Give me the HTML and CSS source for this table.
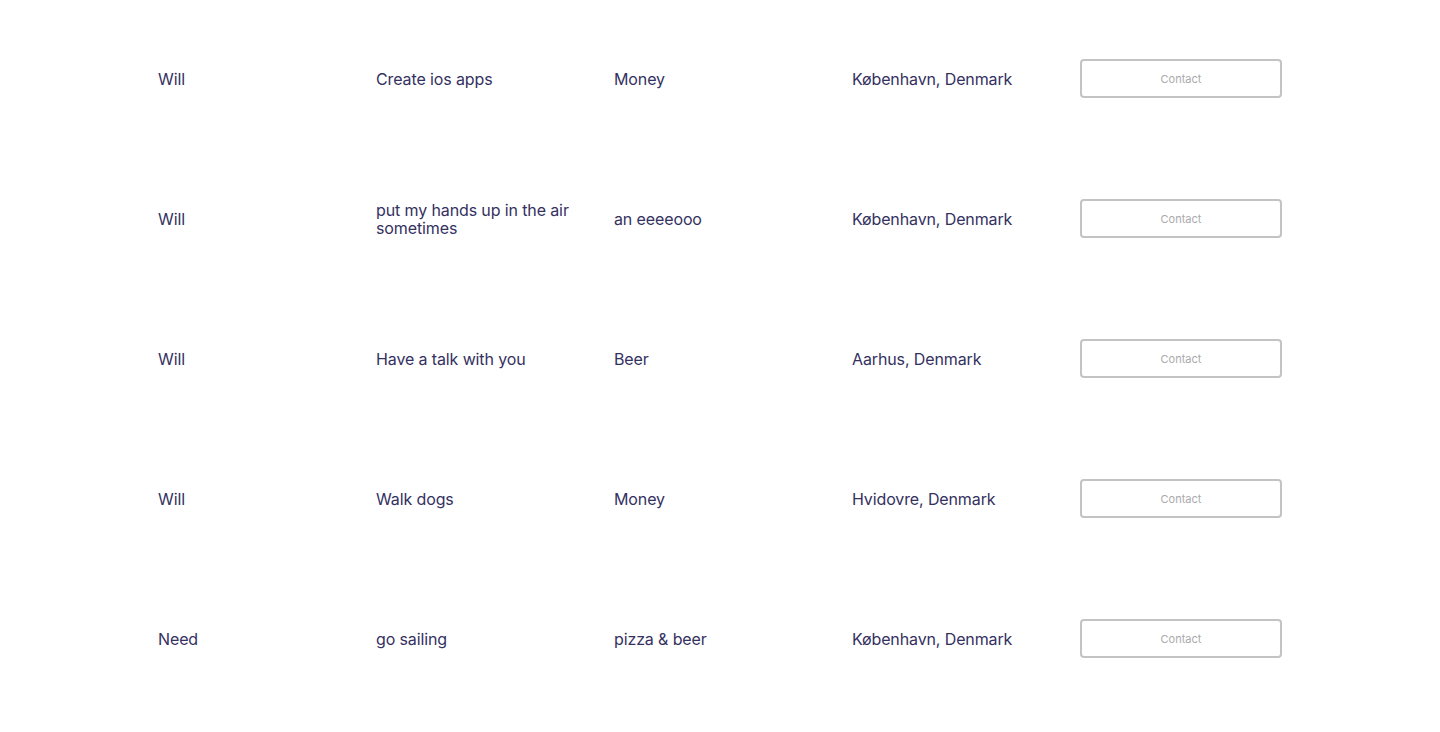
FILE: index.html
```html
<!DOCTYPE html>
<html>
<head>
<meta charset="utf-8">
<link rel="stylesheet" href="styles.css">
</head>
<body>
<div class="list">
  <div class="row">
    <div class="cell">Will</div>
    <div class="cell">Create ios apps</div>
    <div class="cell">Money</div>
    <div class="cell">København, Denmark</div>
    <div class="cell"><button class="contact">Contact</button></div>
  </div>
  <div class="row">
    <div class="cell">Will</div>
    <div class="cell">put my hands up in the air sometimes</div>
    <div class="cell">an eeeeooo</div>
    <div class="cell">København, Denmark</div>
    <div class="cell"><button class="contact">Contact</button></div>
  </div>
  <div class="row">
    <div class="cell">Will</div>
    <div class="cell">Have a talk with you</div>
    <div class="cell">Beer</div>
    <div class="cell">Aarhus, Denmark</div>
    <div class="cell"><button class="contact">Contact</button></div>
  </div>
  <div class="row">
    <div class="cell">Will</div>
    <div class="cell">Walk dogs</div>
    <div class="cell">Money</div>
    <div class="cell">Hvidovre, Denmark</div>
    <div class="cell"><button class="contact">Contact</button></div>
  </div>
  <div class="row">
    <div class="cell">Need</div>
    <div class="cell">go sailing</div>
    <div class="cell">pizza &amp; beer</div>
    <div class="cell">København, Denmark</div>
    <div class="cell"><button class="contact">Contact</button></div>
  </div>
</div>
</body>
</html>
```

FILE: styles.css
```css
html, body {
  margin: 0;
  padding: 0;
  background: #ffffff;
}
body {
  font-family: Inter, "Noto Sans", sans-serif;
  color: #34315f;
}
.list {
  padding: 9px 0 0 158px;
}
.row {
  display: grid;
  grid-template-columns: 218px 238px 238px 228px 202px;
  height: 140px;
  align-items: center;
}
.cell {
  font-size: 16px;
  line-height: 18px;
  letter-spacing: -0.12px;
  padding-right: 24px;
}
.cell:last-child {
  padding-right: 0;
}
.contact {
  display: block;
  width: 202px;
  height: 39px;
  margin-top: -1px;
  border: 2px solid #c3c3c6;
  border-radius: 4px;
  background: #fff;
  color: #a9a9ad;
  font-family: Inter, "Noto Sans", sans-serif;
  font-size: 11px;
  letter-spacing: 0;
  cursor: pointer;
}
```
